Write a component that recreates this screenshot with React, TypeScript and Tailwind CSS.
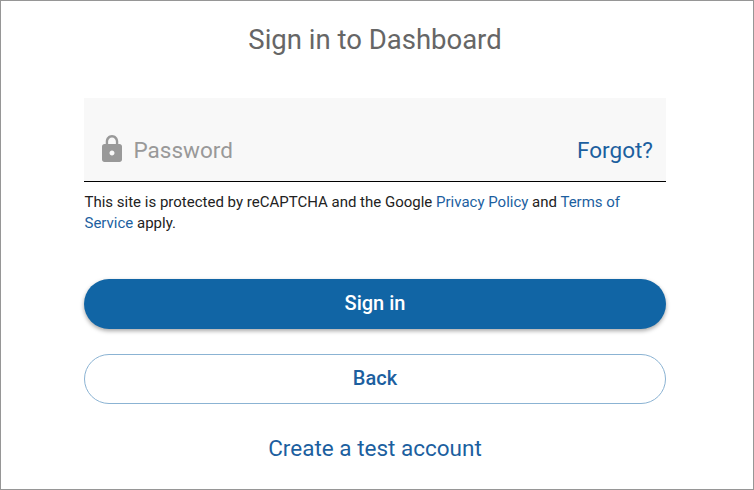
export default function App() {
  return (
    <main className="flex h-[490px] w-[754px] flex-col items-center border border-[#969696] bg-white pr-[4px] font-['Roboto',sans-serif]">
      <h1 className="mt-[21px] text-[27.5px] leading-[36px] text-[#666666]">Sign in to Dashboard</h1>
      <form className="mt-[40px] flex w-[582px] flex-col" onSubmit={(e) => e.preventDefault()}>
        <div className="flex h-[84px] items-start border-b border-black bg-[#f8f8f8] pt-[38px] pr-[13px] pl-[18px]">
          <svg className="-mt-px h-[27px] w-[20px]" viewBox="4 1 16 21" preserveAspectRatio="none" fill="#999999">
            <path d="M18 8h-1V6c0-2.76-2.24-5-5-5S7 3.24 7 6v2H6c-1.1 0-2 .9-2 2v10c0 1.1.9 2 2 2h12c1.1 0 2-.9 2-2V10c0-1.1-.9-2-2-2zm-6 9c-1.1 0-2-.9-2-2s.9-2 2-2 2 .9 2 2-.9 2-2 2zm3.1-9H8.9V6c0-1.71 1.39-3.1 3.1-3.1s3.1 1.39 3.1 3.1v2z" />
          </svg>
          <span className="ml-[11.5px] flex-1 text-[22.5px] leading-[28px] text-[#999999]">Password</span>
          <a className="text-[22.5px] leading-[28px] text-[#1c5f9f]">Forgot?</a>
        </div>
        <p className="mt-[10px] pl-[0.5px] text-[15px] leading-[21px] text-[#222222]">
          This site is protected by reCAPTCHA and the Google <a className="text-[#1c5f9f]">Privacy Policy</a> and <a className="text-[#1c5f9f]">Terms of<br />Service</a> apply.
        </p>
        <button className="mt-[45px] h-[50px] rounded-full bg-[#1165a5] pb-[2px] text-[20px] font-medium text-white shadow-[0_2px_4px_rgba(0,0,0,0.35)]">Sign in</button>
        <button className="mt-[25px] h-[50px] rounded-full border border-[#8bb3d3] pb-[2px] text-[20px] font-medium text-[#1c5f9f]">Back</button>
      </form>
      <a className="mt-[29px] text-[22.5px] leading-[30px] text-[#1c5f9f]">Create a test account</a>
    </main>
  );
}
